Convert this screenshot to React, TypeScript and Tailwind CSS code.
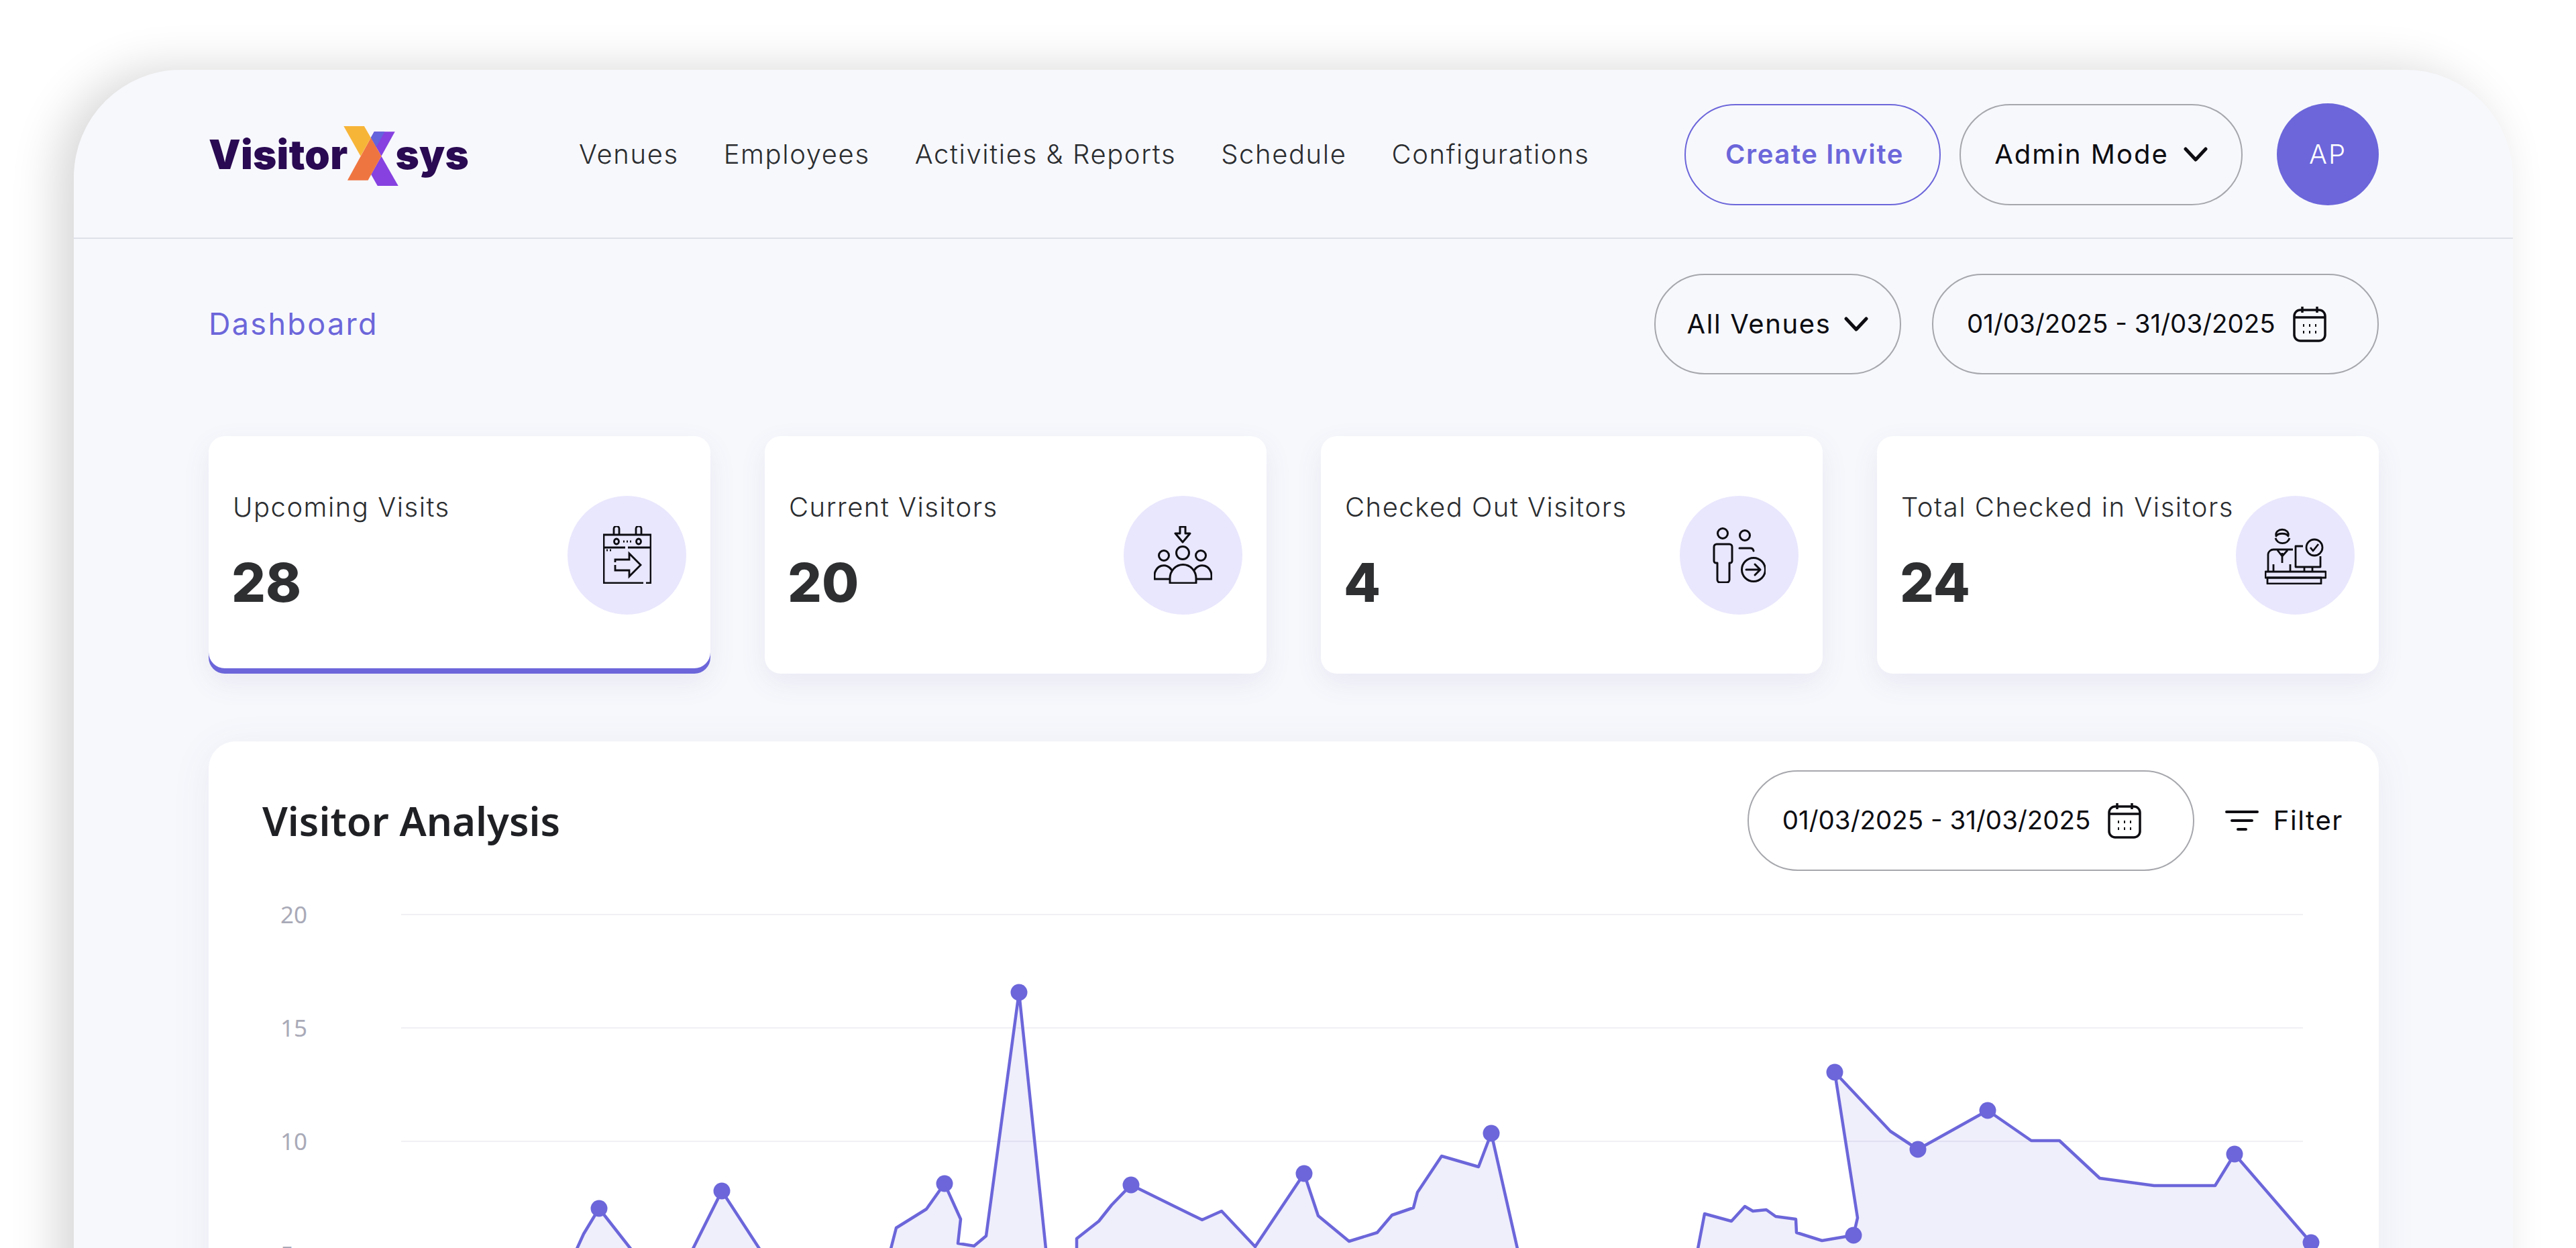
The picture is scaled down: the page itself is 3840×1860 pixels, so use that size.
const NAV_LINKS = ["Venues", "Employees", "Activities & Reports", "Schedule", "Configurations"]

const GRID_LABELS = ["20", "15", "10", "5"]

const CHART_POINTS: [number, number][] = [
  [860, 1860], [870, 1838], [893, 1800], [940, 1860], [960, 1900], [1015, 1900], [1033, 1860], [1076, 1774],
  [1132, 1860], [1150, 1900], [1320, 1900], [1328, 1860], [1336, 1829], [1381, 1801], [1408, 1763], [1432, 1816],
  [1428, 1852], [1452, 1856], [1470, 1841], [1519, 1478], [1559, 1860], [1565, 1900], [1605, 1900], [1605, 1845],
  [1638, 1819], [1657, 1795], [1686, 1765], [1753, 1798], [1792, 1817], [1821, 1804], [1871, 1857], [1944, 1748],
  [1965, 1811], [2011, 1849], [2053, 1836], [2075, 1810], [2107, 1799], [2113, 1776], [2149, 1722], [2204, 1738],
  [2223, 1688], [2262, 1860], [2270, 1900], [2525, 1900], [2531, 1860], [2541, 1808], [2581, 1819], [2601, 1797],
  [2613, 1804], [2633, 1802], [2647, 1812], [2677, 1816], [2678, 1836], [2716, 1848], [2763, 1840], [2769, 1814],
  [2735, 1597], [2818, 1685], [2859, 1712], [2963, 1654], [3028, 1699], [3070, 1699], [3130, 1755], [3211, 1766],
  [3302, 1766], [3331, 1719], [3445, 1851],
]

const CHART_DOTS: [number, number][] = [
  [893, 1800], [1076, 1774], [1408, 1763], [1519, 1478], [1686, 1765], [1944, 1748], [2223, 1688], [2735, 1597],
  [2763, 1840], [2859, 1712], [2963, 1654], [3331, 1719], [3445, 1851],
]

const linePoints = CHART_POINTS.map(([x, y]) => `${x},${y}`).join(" ")
const areaPoints = `860,1950 ${linePoints} 3445,1950`

const Chevron = () => (
  <svg width="36" height="22" viewBox="0 0 36 22" fill="none" stroke="#0d0d12" strokeWidth="5" strokeLinecap="round" strokeLinejoin="round">
    <path d="M3 3 L18 19 L33 3" />
  </svg>
)

const CalendarIcon = () => (
  <svg width="50" height="54" viewBox="0 0 50 54" fill="none" stroke="#0d0d12" strokeWidth="3.5">
    <rect x="2" y="6" width="46" height="46" rx="9" />
    <path d="M2 17 H48 M14 1 V10 M36 1 V10" />
    <path d="M15 29 H17 M24 29 H26 M33 29 H35 M15 39 H17 M24 39 H26 M33 39 H35" strokeWidth="4" />
  </svg>
)

const FilterIcon = () => (
  <svg width="50" height="32" viewBox="0 0 50 32" fill="none" stroke="#0d0d12" strokeWidth="4" strokeLinecap="round">
    <path d="M2 3 H48 M10 16 H40 M19 29 H31" />
  </svg>
)

const Logo = () => (
  <div className="flex items-center text-[#2a0a52] text-[60px] font-black leading-none tracking-[0.3px]">
    <span>Visitor</span>
    <svg width="82" height="89" viewBox="673 75 245 268" className="-ml-[6px] -mr-[5px] mt-[4px]">
      <path d="M796 292 L842 210 L918 343 L825 343 Z" fill="#8641e0" />
      <path d="M903 100 L842 210 L795 127 L810 100 Z" fill="#8641e0" />
      <path d="M810 100 L857 100 L819 170 L795 127 Z" fill="#6464dc" />
      <path d="M795 127 L842 210 L782 318 L690 318 Z" fill="#ef7540" />
      <path d="M673 75 L765 75 L795 127 L749 210 Z" fill="#f7b538" />
    </svg>
    <span>sys</span>
  </div>
)

const UpcomingIcon = () => (
  <svg width="72" height="86" viewBox="0 0 72 86" fill="none" stroke="#0d0d12" strokeWidth="2.8">
    <path d="M33 32 H1 V85 H60 M64 85 H71 V13 H1 V32 M37 32 H71" />
    <path d="M16 13 V4 a4 4 0 0 1 8 0 V13 M49 13 V4 a4 4 0 0 1 8 0 V13" />
    <ellipse cx="20" cy="23" rx="3.5" ry="4" />
    <ellipse cx="53" cy="23" rx="3.5" ry="4" />
    <path d="M30 23 H32 M35 23 H37 M40 23 H42 M5 36 H7 M10 36 H12" />
    <path d="M18 54 V50 H39 V41 L56 58 L39 75 V66 H18 V58" />
  </svg>
)

const CurrentIcon = () => (
  <svg width="87" height="86" viewBox="0 0 87 86" fill="none" stroke="#0d0d12" strokeWidth="3" strokeLinejoin="round">
    <path d="M39 1 H47 V11 H54 L43 24 L32 11 H39 Z" />
    <circle cx="43" cy="40" r="9.5" />
    <circle cx="15" cy="44" r="7.5" />
    <circle cx="70" cy="44" r="7.5" />
    <path d="M24 85 V78 a19 20 0 0 1 39 0 V85 Z" />
    <path d="M24 79 H1 V74 a14 15 0 0 1 26 -8" />
    <path d="M63 79 H86 V74 a14 15 0 0 0 -26 -8" />
  </svg>
)

const CheckedOutIcon = () => (
  <svg width="79" height="83" viewBox="0 0 79 83" fill="none" stroke="#0d0d12" strokeWidth="3" strokeLinecap="round" strokeLinejoin="round">
    <circle cx="15" cy="9" r="7.5" />
    <circle cx="48" cy="12" r="7.5" />
    <path d="M6 25 H25 a4 4 0 0 1 4 4 V50 a3 3 0 0 1 -3 3 H25 V78 a4 4 0 0 1 -4 4 H11 a4 4 0 0 1 -4 -4 V53 H5 a3 3 0 0 1 -3 -3 V29 a4 4 0 0 1 4 -4 Z" />
    <path d="M40 31 H56 a5 5 0 0 1 5 4" />
    <circle cx="61" cy="63" r="17.5" />
    <path d="M50 63 H71 M63 55 L71 63 L63 71" />
  </svg>
)

const CheckedInIcon = () => (
  <svg width="92" height="87" viewBox="0 0 92 87" fill="none" stroke="#0d0d12" strokeWidth="2.8" strokeLinejoin="round">
    <path d="M17 15 C14 2 38 2 35 15 C32 10 20 10 17 15 Z" />
    <path d="M16 18 a11 11 0 0 0 21 0" />
    <path d="M5 68 V42 a8 8 0 0 1 8 -7 H42 M19 36 L26 45 L34 36 M26 40 V55 M13 57 V68 M38 57 V68" />
    <path d="M57 30 H46 V61 H83 V45 M59 61 V68 M71 61 V68" />
    <circle cx="74" cy="32" r="12" />
    <path d="M68 32 L72 37 L80 27" />
    <rect x="1" y="68" width="90" height="9" />
    <rect x="4" y="77" width="80" height="9" />
  </svg>
)

const STATS = [
  { label: "Upcoming Visits", value: "28", icon: <UpcomingIcon />, active: true },
  { label: "Current Visitors", value: "20", icon: <CurrentIcon />, active: false },
  { label: "Checked Out Visitors", value: "4", icon: <CheckedOutIcon />, active: false },
  { label: "Total Checked in Visitors", value: "24", icon: <CheckedInIcon />, active: false },
]

const StatCard = ({ label, value, icon, active }: (typeof STATS)[number]) => (
  <div
    className={
      active
        ? "flex items-center justify-between h-[354px] px-[36px] rounded-[24px] bg-white shadow-[inset_0_-8px_0_#6c66da,0_14px_40px_rgba(90,90,150,0.09)]"
        : "flex items-center justify-between h-[354px] px-[36px] rounded-[24px] bg-white shadow-[0_14px_40px_rgba(90,90,150,0.09)]"
    }
  >
    <div className="flex flex-col gap-[55px] -mt-[21px]">
      <span className="text-[40px] font-light leading-[48px] tracking-[1.5px] text-[#2b2d30] whitespace-nowrap">{label}</span>
      <span className="-ml-[2px] text-[80px] font-extrabold leading-[66px] text-[#2d2f31]">{value}</span>
    </div>
    <div className="flex items-center justify-center shrink-0 w-[177px] h-[177px] rounded-full bg-[#e9e7fd]">{icon}</div>
  </div>
)

export default function App() {
  return (
    <div className="h-[1860px] overflow-hidden bg-white font-['Inter'] pt-[104px] pl-[110px]">
      <div className="w-[3636px] h-[1900px] rounded-t-[160px] bg-[#f7f8fc] shadow-[-24px_0_70px_rgba(0,0,0,0.16)]">
        <header className="flex items-center h-[252px] pt-[2px] pl-[201px] pr-[200px] border-b-2 border-[#dfe1e9]">
          <Logo />
          <nav className="flex items-center gap-[67px] ml-[164px] text-[40px] font-light tracking-[1.6px] text-[#2b2d30]">
            {NAV_LINKS.map((link) => (
              <span key={link}>{link}</span>
            ))}
          </nav>
          <div className="flex items-center ml-auto">
            <button className="w-[382px] h-[151px] pl-[6px] rounded-full border-2 border-[#6c66da] text-[40px] font-semibold tracking-[1.6px] text-[#6c66da]">
              Create Invite
            </button>
            <button className="flex items-center justify-center gap-[22px] w-[422px] h-[151px] ml-[28px] rounded-full border-2 border-[#a6a7ad] text-[40px] tracking-[2px] text-[#0d0d12]">
              Admin Mode
              <Chevron />
            </button>
            <div className="flex items-center justify-center w-[152px] h-[152px] ml-[51px] rounded-full bg-[#6c66da] text-[40px] font-light tracking-[2px] text-white">
              AP
            </div>
          </div>
        </header>

        <div className="pl-[201px] pr-[200px]">
          <div className="flex items-center justify-between h-[150px] mt-[52px]">
            <span className="text-[45px] tracking-[2.3px] text-[#6c66da]">Dashboard</span>
            <div className="flex items-center gap-[46px]">
              <button className="flex items-center justify-center gap-[20px] w-[368px] h-[150px] rounded-full border-2 border-[#a6a7ad] text-[40px] tracking-[1.6px] text-[#0d0d12]">
                All Venues
                <Chevron />
              </button>
              <button className="flex items-center gap-[26px] w-[666px] h-[150px] pl-[50px] rounded-full border-2 border-[#a6a7ad] text-[38.5px] text-[#0d0d12]">
                01/03/2025 - 31/03/2025
                <CalendarIcon />
              </button>
            </div>
          </div>

          <div className="grid grid-cols-4 gap-[81px] mt-[92px]">
            {STATS.map((stat) => (
              <StatCard key={stat.label} {...stat} />
            ))}
          </div>

          <section className="mt-[101px] pt-[43px] rounded-t-[40px] h-[900px] bg-white shadow-[0_10px_60px_rgba(90,90,150,0.08)]">
            <div className="flex items-center pl-[80px] pr-[53px]">
              <h2 className="font-['Noto_Sans'] text-[60px] font-semibold leading-none text-[#1f2024]">Visitor Analysis</h2>
              <button className="flex items-center gap-[26px] w-[666px] h-[150px] ml-auto pl-[50px] rounded-full border-2 border-[#a6a7ad] text-[38.5px] text-[#0d0d12]">
                01/03/2025 - 31/03/2025
                <CalendarIcon />
              </button>
              <div className="flex items-center gap-[22px] ml-[46px] text-[40px] tracking-[1.6px] text-[#0d0d12]">
                <FilterIcon />
                Filter
              </div>
            </div>

            <div className="relative mt-[45px] ml-[107px] mr-[113px]">
              {GRID_LABELS.map((label) => (
                <div key={label} className="flex items-center h-[40px] mb-[129px]">
                  <span className="w-[180px] font-['Noto_Sans'] text-[35px] text-[#a9aab8]">{label}</span>
                  <div className="flex-1 h-[2px] bg-[#f0f0f5]" />
                </div>
              ))}
              <svg width="3050" height="560" viewBox="418 1342 3050 560" className="absolute left-0 top-0">
                <polygon points={areaPoints} fill="#6c66da" fillOpacity="0.11" />
                <polyline points={linePoints} fill="none" stroke="#6c66da" strokeWidth="4.5" strokeLinejoin="round" />
                {CHART_DOTS.map(([x, y]) => (
                  <circle key={x} cx={x} cy={y} r="12.5" fill="#6c66da" />
                ))}
              </svg>
            </div>
          </section>
        </div>
      </div>
    </div>
  )
}
